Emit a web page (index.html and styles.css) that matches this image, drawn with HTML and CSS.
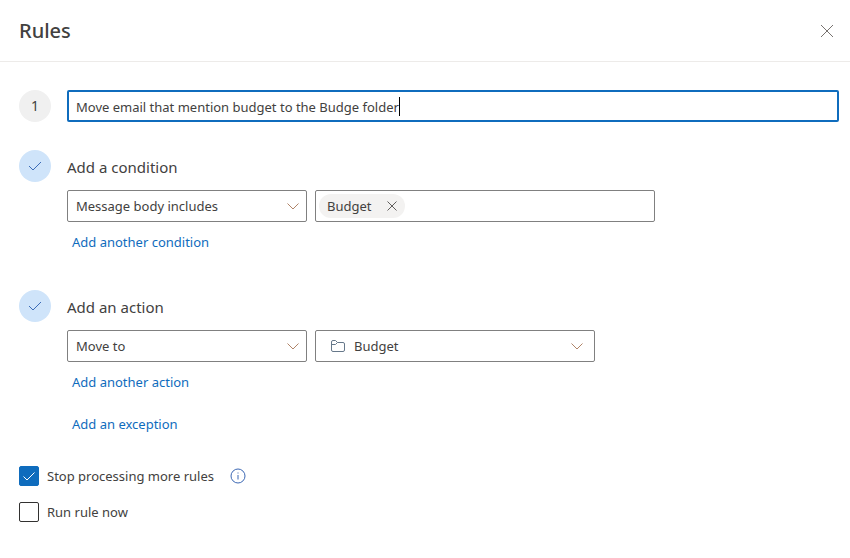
FILE: index.html
```html
<!DOCTYPE html>
<html lang="en">
<head>
<meta charset="utf-8">
<meta name="viewport" content="width=device-width, initial-scale=1">
<title>Rules</title>
<link rel="stylesheet" href="styles.css">
</head>
<body>
<header class="header">
  <h1 class="title">Rules</h1>
  <button class="icon-button" type="button" aria-label="Close">
    <svg width="14" height="14" viewBox="0 0 14 14" fill="none" stroke="#77726f"><path d="M1 1l12 12M13 1L1 13"/></svg>
  </button>
</header>
<main>
<form class="form">
  <section class="step">
    <span class="badge">1</span>
    <div class="name-box">
      <input class="name" type="text" aria-label="Rule name" value="Move email that mention budget to the Budge folder">
      <span class="caret"></span>
    </div>
  </section>

  <section class="step">
    <span class="badge done"><svg width="14" height="10" viewBox="0 0 14 10" fill="none" stroke="#3c6cb8"><path d="M1 5l4 4 8-8"/></svg></span>
    <div>
      <h2 class="heading">Add a condition</h2>
      <div class="fields">
        <div class="drop narrow">
          <select class="select" aria-label="Condition"><option>Message body includes</option></select>
          <svg class="chevron" width="12" height="7" viewBox="0 0 12 7" fill="none" stroke="#b08468"><path d="M.5 .5L6 6l5.500-5.500"/></svg>
        </div>
        <div class="tokens">
          <span class="token">Budget
            <button class="remove" type="button" aria-label="Remove Budget"><svg width="10" height="10" viewBox="0 0 10 10" fill="none" stroke="#605e5c"><path d="M.5 .5l9 9M9.500 .5l-9 9"/></svg></button>
          </span>
        </div>
      </div>
      <a class="link" href="#condition">Add another condition</a>
    </div>
  </section>

  <section class="step">
    <span class="badge done"><svg width="14" height="10" viewBox="0 0 14 10" fill="none" stroke="#3c6cb8"><path d="M1 5l4 4 8-8"/></svg></span>
    <div>
      <h2 class="heading">Add an action</h2>
      <div class="fields">
        <div class="drop narrow">
          <select class="select" aria-label="Action"><option>Move to</option></select>
          <svg class="chevron" width="12" height="7" viewBox="0 0 12 7" fill="none" stroke="#b08468"><path d="M.5 .5L6 6l5.500-5.500"/></svg>
        </div>
        <div class="drop wide">
          <svg class="folder" width="14" height="12" viewBox="0 0 14 12" fill="none" stroke="#66788a"><path d="M.5 2a1.500 1.500 0 0 1 1.500-1.500h2.500L6.500 2.500h5.500a1.500 1.500 0 0 1 1.500 1.500v6a1.500 1.500 0 0 1-1.500 1.500h-10a1.500 1.500 0 0 1-1.500-1.500zM.5 4.500h4l2-2"/></svg>
          <select class="select with-icon" aria-label="Folder"><option>Budget</option></select>
          <svg class="chevron" width="12" height="7" viewBox="0 0 12 7" fill="none" stroke="#b08468"><path d="M.5 .5L6 6l5.500-5.500"/></svg>
        </div>
      </div>
      <a class="link" href="#action">Add another action</a>
      <a class="link exception" href="#exception">Add an exception</a>
    </div>
  </section>

  <div class="options">
    <div class="option">
      <label class="check"><span class="box"><input type="checkbox" checked><svg class="tick" width="12" height="9" viewBox="0 0 12 9" fill="none" stroke="#fff"><path d="M.5 4.500l3.500 3.500 7.500-7.500"/></svg></span>Stop processing more rules</label>
      <button class="icon-button" type="button" aria-label="More information">
        <svg width="16" height="16" viewBox="0 0 16 16" fill="none" stroke="#3c68b4"><circle cx="8" cy="8" r="7"/><path d="M8 7v4.500M8 4.500v1"/></svg>
      </button>
    </div>
    <div class="option">
      <label class="check"><span class="box"><input type="checkbox"></span>Run rule now</label>
    </div>
  </div>
</form>
</main>
</body>
</html>
```
FILE: styles.css
```css
* {
  box-sizing: border-box;
}

body {
  margin: 0;
  background: #fff;
  color: #424140;
  font: 13px/20px "Noto Sans", "Open Sans", sans-serif;
}

input,
select,
button {
  margin: 0;
  color: inherit;
  font: inherit;
}

svg {
  display: block;
}

.header {
  display: flex;
  align-items: center;
  justify-content: space-between;
  padding: 17px 16px 16px 19px;
  border-bottom: 1px solid #edebe9;
}

.title {
  margin: 0;
  font-size: 20px;
  line-height: 28px;
  font-weight: 500;
}

.icon-button,
.remove {
  padding: 0;
  border: 0;
  background: none;
}

.form {
  padding: 28px 11px 28px 19px;
}

.step {
  display: grid;
  grid-template-columns: 32px 1fr;
  column-gap: 16px;
  margin-bottom: 38px;
}

.step:first-child {
  margin-bottom: 28px;
}

.badge {
  display: grid;
  place-items: center;
  height: 32px;
  border-radius: 50%;
  background: #f0f0f0;
  font-size: 14px;
}

.done {
  background: #cfe4fa;
}

.name-box {
  position: relative;
}

.name {
  display: block;
  width: 100%;
  height: 32px;
  padding: 2px 7px 0;
  border: 2px solid #0f6cbd;
  border-radius: 2px;
  outline: 0;
  background: #fff;
}

.caret {
  position: absolute;
  top: 7px;
  left: 332px;
  width: 1px;
  height: 19px;
  background: #000;
}

.heading {
  margin: 0 0 6px;
  font-size: 15px;
  line-height: 34px;
  font-weight: 400;
}

.fields {
  display: flex;
  gap: 8px;
}

.drop,
.tokens {
  position: relative;
  height: 32px;
  border: 1px solid #808080;
  border-radius: 2px;
}

.narrow {
  width: 240px;
}

.wide {
  width: 280px;
}

.tokens {
  display: flex;
  align-items: center;
  width: 340px;
  padding: 0 3px;
}

.select {
  display: block;
  width: 100%;
  height: 100%;
  padding: 0 28px 0 8px;
  border: 0;
  background: none;
  appearance: none;
}

.with-icon {
  padding-left: 38px;
}

.chevron {
  position: absolute;
  top: 12px;
  right: 7px;
  pointer-events: none;
}

.wide .chevron {
  right: 11px;
}

.folder {
  position: absolute;
  top: 9px;
  left: 15px;
}

.token {
  display: flex;
  align-items: center;
  gap: 15px;
  height: 24px;
  padding: 0 8px;
  border-radius: 12px;
  background: #f3f2f1;
}

.link {
  display: block;
  width: fit-content;
  margin: 10px 0 0 5px;
  color: #0f6cbd;
  text-decoration: none;
}

.exception {
  margin-top: 22px;
}

.options {
  display: grid;
  gap: 16px;
  margin-top: -6px;
}

.option,
.check {
  display: flex;
  align-items: center;
}

.option {
  gap: 16px;
}

.check {
  gap: 8px;
}

.box {
  display: grid;
  place-items: center;
}

.box > * {
  grid-area: 1 / 1;
}

.box input {
  width: 20px;
  height: 20px;
  border: 1px solid #323130;
  border-radius: 2px;
  appearance: none;
}

.box input:checked {
  border-color: #0f6cbd;
  background: #0f6cbd;
}

.tick {
  z-index: 1;
  pointer-events: none;
}
```
